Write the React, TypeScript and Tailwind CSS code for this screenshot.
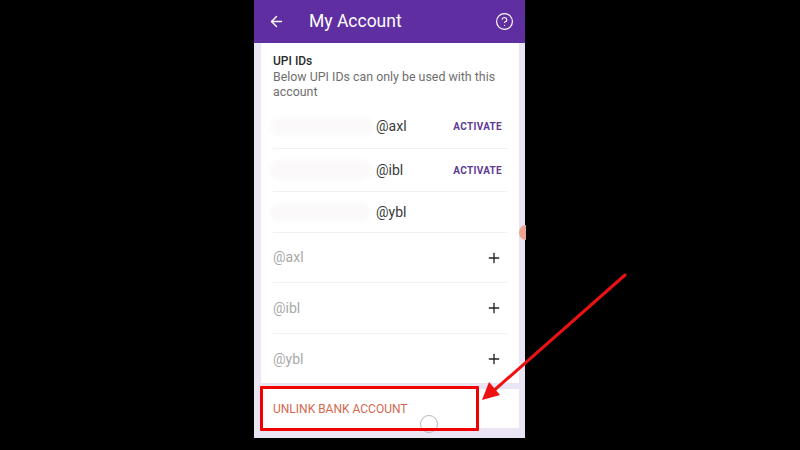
import React from 'react';
import { ArrowLeft, CircleHelp, Plus } from 'lucide-react';

const linked = [
  { id: '@axl', active: true, h: 'h-[44px]', smudge: 'w-[104px] h-[17px]' },
  { id: '@ibl', active: true, h: 'h-[43px]', smudge: 'w-[102px] h-[20px]' },
  { id: '@ybl', active: false, h: 'h-[41px]', smudge: 'w-[100px] h-[18px]' },
];

const available = [
  { id: '@axl', h: 'h-[50px]' },
  { id: '@ibl', h: 'h-[51px]' },
  { id: '@ybl', h: 'h-[50px]' },
];

export default function App() {
  return (
    <div className="relative w-[800px] h-[450px] overflow-hidden bg-black font-['Roboto',sans-serif]">
      {/* Phone */}
      <div className="ml-[254px] w-[271px] h-[438px] flex flex-col bg-[#ebe4f5]">
        <div className="h-[43px] shrink-0 flex items-center bg-[#5f2ea1] text-white pl-[14px] pr-[11px]">
          <ArrowLeft size={17} strokeWidth={2} />
          <span className="ml-[24px] text-[17.5px] leading-none">My Account</span>
          <CircleHelp size={19} strokeWidth={1.5} className="ml-auto" />
        </div>

        <div className="ml-[7px] mr-[6px] h-[340px] shrink-0 bg-white px-[12px]">
          <div className="pt-[10px] h-[62px]">
            <div className="text-[12px] leading-[14px] font-medium text-[#2c2c2c] mt-[1px]">UPI IDs</div>
            <div className="text-[12.4px] leading-[14.5px] text-[#6f6f6f] mt-[2px]">
              Below UPI IDs can only be used with this account
            </div>
          </div>

          {linked.map((row) => (
            <div key={row.id + 'a'} className={`${row.h} flex items-center border-b border-[#f1f1f1]`}>
              <div className="w-[103px] shrink-0 -ml-[3px]">
                <div className={`${row.smudge} rounded-full bg-[#fbf9f9] blur-[2px]`} />
              </div>
              <span className="ml-[3px] text-[14px] text-[#3a3a3a]">{row.id}</span>
              <span className={`ml-auto pr-[5px] text-[10px] font-bold tracking-[0.3px] text-[#5d3a94] ${row.active ? '' : 'invisible'}`}>
                ACTIVATE
              </span>
            </div>
          ))}

          {available.map((row, i) => (
            <div key={row.id + 'b'} className={`${row.h} flex items-center justify-between pr-[5px] ${i < 2 ? 'border-b border-[#f1f1f1]' : ''}`}>
              <span className="text-[14px] text-[#a9a9a9]">{row.id}</span>
              <Plus size={16} strokeWidth={2} className="text-[#222222]" />
            </div>
          ))}
        </div>

        <div className="ml-[7px] mr-[6px] mt-[6px] h-[39px] shrink-0 flex items-center bg-white px-[12px]">
          <span className="pt-[1px] text-[12px] text-[#d2694f]">UNLINK BANK ACCOUNT</span>
        </div>
      </div>

      {/* Scroll handle */}
      <div className="absolute left-[519px] top-[225px] w-[7px] h-[15px] rounded-l-full bg-[#eda593]" />

      {/* Home button */}
      <div className="absolute left-[420px] top-[415px] w-[18px] h-[18px] rounded-full border border-[#b8b8b8]" />

      {/* Highlight box */}
      <div className="absolute left-[260px] top-[386px] w-[219px] h-[45px] border-[3px] border-[#f00000] rounded-[1px]" />

      {/* Arrow */}
      <svg className="absolute left-0 top-0" width="800" height="450" viewBox="0 0 800 450" fill="none">
        <line x1="625" y1="275" x2="490" y2="394" stroke="#ee1111" strokeWidth="3" strokeLinecap="round" />
        <polygon points="482,400 489,382 500,395" fill="#ee1111" />
      </svg>
    </div>
  );
}
